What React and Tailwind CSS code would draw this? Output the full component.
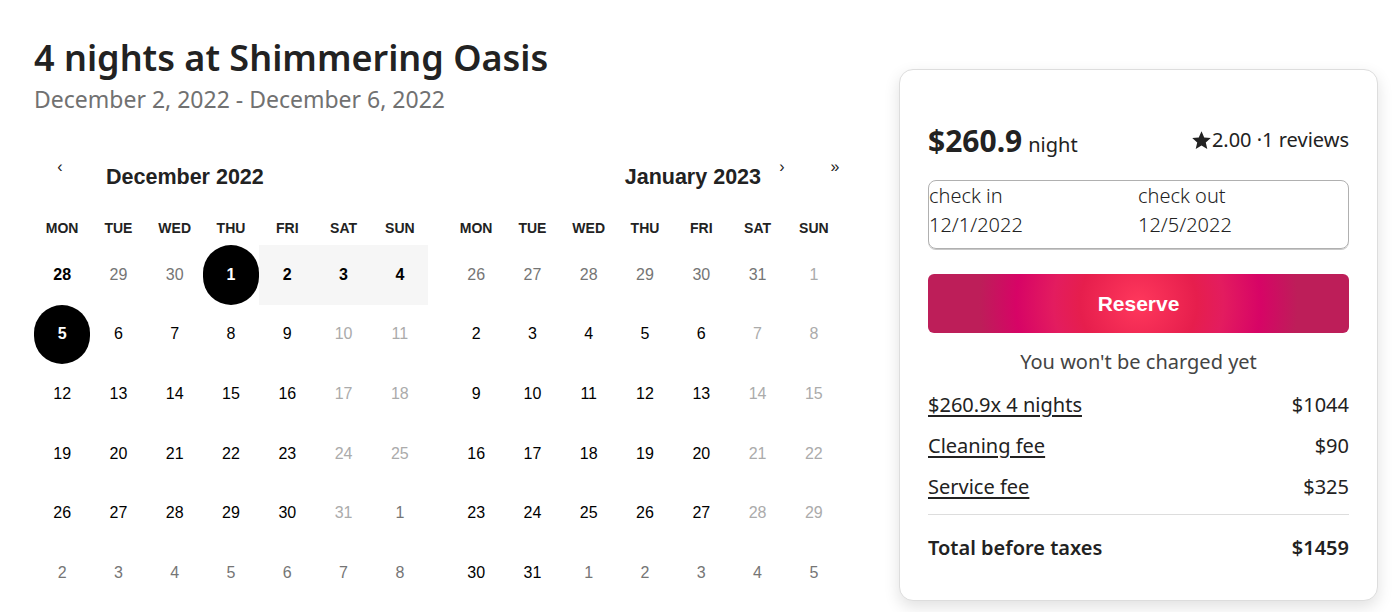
import { useState } from 'react';

const BLACK = 'text-black';
const MID = 'text-[#757575]';
const LIGHT = 'text-[#ababab]';

// each day: [label, kind]
// kind: n = normal, m = neighbour month, l = light (weekend), s = selected, r = in range, b = bold
const december = [
  [['28', 'b'], ['29', 'm'], ['30', 'm'], ['1', 's'], ['2', 'r'], ['3', 'r'], ['4', 'r']],
  [['5', 's'], ['6', 'n'], ['7', 'n'], ['8', 'n'], ['9', 'n'], ['10', 'l'], ['11', 'l']],
  [['12', 'n'], ['13', 'n'], ['14', 'n'], ['15', 'n'], ['16', 'n'], ['17', 'l'], ['18', 'l']],
  [['19', 'n'], ['20', 'n'], ['21', 'n'], ['22', 'n'], ['23', 'n'], ['24', 'l'], ['25', 'l']],
  [['26', 'n'], ['27', 'n'], ['28', 'n'], ['29', 'n'], ['30', 'n'], ['31', 'l'], ['1', 'm']],
  [['2', 'm'], ['3', 'm'], ['4', 'm'], ['5', 'm'], ['6', 'm'], ['7', 'm'], ['8', 'm']],
];

const january = [
  [['26', 'm'], ['27', 'm'], ['28', 'm'], ['29', 'm'], ['30', 'm'], ['31', 'm'], ['1', 'l']],
  [['2', 'n'], ['3', 'n'], ['4', 'n'], ['5', 'n'], ['6', 'n'], ['7', 'l'], ['8', 'l']],
  [['9', 'n'], ['10', 'n'], ['11', 'n'], ['12', 'n'], ['13', 'n'], ['14', 'l'], ['15', 'l']],
  [['16', 'n'], ['17', 'n'], ['18', 'n'], ['19', 'n'], ['20', 'n'], ['21', 'l'], ['22', 'l']],
  [['23', 'n'], ['24', 'n'], ['25', 'n'], ['26', 'n'], ['27', 'n'], ['28', 'l'], ['29', 'l']],
  [['30', 'n'], ['31', 'n'], ['1', 'm'], ['2', 'm'], ['3', 'm'], ['4', 'm'], ['5', 'm']],
];

const weekdays = ['MON', 'TUE', 'WED', 'THU', 'FRI', 'SAT', 'SUN'];

function Day({ label, kind }) {
  let cls = BLACK;
  if (kind === 'm') cls = MID;
  if (kind === 'l') cls = LIGHT;
  if (kind === 'b') cls = 'text-black font-bold';
  if (kind === 'r') cls = 'text-black font-bold bg-[#f6f6f6]';
  if (kind === 's') cls = 'text-white font-bold bg-black rounded-full';
  return (
    <div className={`h-[59.6px] flex items-center justify-center text-[16px] ${cls}`}>
      {label}
    </div>
  );
}

function Month({ rows }) {
  return (
    <div className="w-[394px]">
      <div className="grid grid-cols-7 h-[34px] mt-[14px] items-center">
        {weekdays.map((d) => (
          <div key={d} className="text-center text-[14px] font-bold text-[#222]">{d}</div>
        ))}
      </div>
      <div className="grid grid-cols-7">
        {rows.flat().map(([label, kind], i) => (
          <Day key={i} label={label} kind={kind} />
        ))}
      </div>
    </div>
  );
}

function Star() {
  return (
    <svg width="21" height="21" viewBox="0 0 24 24" fill="#222">
      <path d="M12 1.5l3.1 7 7.5.7-5.7 5 1.7 7.4L12 17.8l-6.6 3.8 1.7-7.4-5.7-5 7.5-.7z" />
    </svg>
  );
}

export default function App() {
  const [nights] = useState(4);

  return (
    <div className="flex pl-[34px] bg-white min-h-[612px] text-[#222]">
      {/* Left: title + calendar */}
      <div className="w-[808px] pt-[36px]">
        <h1 className="text-[36px] leading-[44px] font-semibold text-[#222] font-['Noto_Sans',sans-serif]">
          {nights} nights at Shimmering Oasis
        </h1>
        <p className="mt-[5px] text-[23px] leading-[28px] text-[#717171] font-['Noto_Sans',sans-serif]">
          December 2, 2022 - December 6, 2022
        </p>

        <div className="mt-[44px] font-['Liberation_Sans',Arial,sans-serif]">
          {/* Navigation */}
          <div className="flex items-center h-[40px] w-[811px]">
            <span className="w-[52px] text-center self-start leading-[20px] text-[16px] text-[#222]">‹</span>
            <span className="ml-[20px] text-[21.5px] font-bold text-[#222]">December 2022</span>
            <div className="flex-1" />
            <span className="text-[21.5px] font-bold text-[#222]">January 2023</span>
            <span className="w-[20px] ml-[11px] text-center self-start leading-[20px] text-[16px] text-[#222]">›</span>
            <span className="w-[20px] ml-[33px] text-center self-start leading-[20px] text-[16px] text-[#222]">»</span>
          </div>

          <div className="flex gap-[20px]">
            <Month rows={december} />
            <Month rows={january} />
          </div>
        </div>
      </div>

      {/* Right: booking card */}
      <div className="ml-[57px] mt-[69px] w-[479px] h-[532px] rounded-[14px] border border-[#dddddd] bg-white shadow-[0_6px_16px_rgba(0,0,0,0.12)] px-[28px] pt-[50px] font-['Noto_Sans',sans-serif]">
        <div className="flex items-center justify-between h-[40px]">
          <div className="flex items-baseline gap-[6px]">
            <span className="text-[30px] font-bold text-[#222]">$260.9</span>
            <span className="text-[20px] text-[#222]">night</span>
          </div>
          <div className="flex items-center text-[20px] text-[#222]">
            <Star />
            <span>2.00 ·1 reviews</span>
          </div>
        </div>

        <div className="mt-[20px] h-[69px] rounded-[8px] border border-[#b0b0b0] shadow-[0_1px_0_#c8c8c8] flex text-[20px] leading-[29px] text-[#222] font-light">
          <div className="w-[209px]">
            <div>check in</div>
            <div>12/1/2022</div>
          </div>
          <div className="flex-1">
            <div>check out</div>
            <div>12/5/2022</div>
          </div>
        </div>

        <button className="mt-[25px] w-full h-[59px] rounded-[6px] text-white text-[21px] font-bold font-['Liberation_Sans',Arial,sans-serif] bg-[radial-gradient(circle_at_center,#ff385c_0%,#e61e4d_27.5%,#e31c5f_40%,#d70466_57.5%,#bd1e59_75%,#bd1e59_100%)]">
          Reserve
        </button>

        <p className="mt-[14px] text-center text-[20px] leading-[30px] text-[#444]">
          You won't be charged yet
        </p>

        <div className="mt-[13px] flex flex-col gap-[11px] text-[20px] leading-[30px] text-[#222]">
          <div className="flex justify-between">
            <span className="underline underline-offset-[3px]">$260.9x 4 nights</span>
            <span>$1044</span>
          </div>
          <div className="flex justify-between">
            <span className="underline underline-offset-[3px]">Cleaning fee</span>
            <span>$90</span>
          </div>
          <div className="flex justify-between">
            <span className="underline underline-offset-[3px]">Service fee</span>
            <span>$325</span>
          </div>
        </div>

        <div className="mt-[12px] border-t border-[#dddddd]" />

        <div className="mt-[18px] flex justify-between text-[20px] leading-[30px] font-semibold text-[#222]">
          <span>Total before taxes</span>
          <span>$1459</span>
        </div>
      </div>
    </div>
  );
}
